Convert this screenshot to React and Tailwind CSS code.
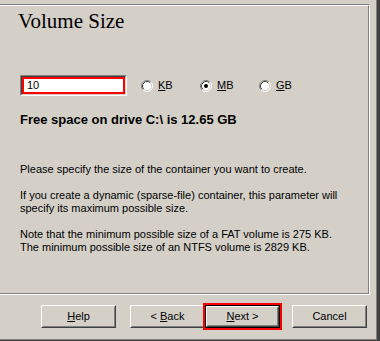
import React from "react";

function Radio({ checked }) {
  return (
    <svg width="12" height="12" viewBox="0 0 12 12" className="shrink-0">
      <circle cx="6" cy="6" r="5" fill="#ffffff" />
      <path d="M2.11 9.89 A5.5 5.5 0 0 1 9.89 2.11" fill="none" stroke="#808080" strokeWidth="1" />
      <path d="M9.89 2.11 A5.5 5.5 0 0 1 2.11 9.89" fill="none" stroke="#ffffff" strokeWidth="1" />
      <path d="M2.82 9.18 A4.5 4.5 0 0 1 9.18 2.82" fill="none" stroke="#404040" strokeWidth="1" />
      <path d="M9.18 2.82 A4.5 4.5 0 0 1 2.82 9.18" fill="none" stroke="#d4d0c8" strokeWidth="1" />
      {checked && <circle cx="6" cy="6" r="2" fill="#000000" />}
    </svg>
  );
}

function RadioItem({ label, checked }) {
  return (
    <div className="w-[59px] flex items-center gap-[5px]">
      <Radio checked={checked} />
      <span>
        <span className="underline underline-offset-[1px]">{label[0]}</span>
        {label.slice(1)}
      </span>
    </div>
  );
}

function Button({ children, isDefault }) {
  const bevel = (
    <div className="h-full w-full border border-t-white border-l-white border-r-[#404040] border-b-[#404040]">
      <div className="h-full w-full border border-t-[#d4d0c8] border-l-[#d4d0c8] border-r-[#808080] border-b-[#808080] flex items-center justify-center">
        {children}
      </div>
    </div>
  );
  if (isDefault) {
    return (
      <div className="w-[75px] h-[23px] border border-black outline-2 outline-[#ff0000] outline-solid relative">
        {bevel}
      </div>
    );
  }
  return <div className="w-[75px] h-[23px]">{bevel}</div>;
}

export default function App() {
  return (
    <div
      className="w-[380px] h-[341px] bg-[#404040] text-black text-[11px] leading-[13px]"
      style={{ fontFamily: '"Liberation Sans", Arial, sans-serif' }}
    >
      <div className="w-[377px] h-[340px] bg-[#808080]">
        <div className="w-[376px] h-[339px] bg-[#d4d0c8] flex flex-col">
          {/* Panel */}
          <div className="mt-[4px] w-[370px] h-[291px] border-t border-r border-b border-t-[#808080] border-r-white border-b-white">
            <div className="w-full h-full border-t border-r border-b border-t-white border-r-[#808080] border-b-[#808080] flex flex-col">
              <div
                className="pl-[18px] mt-[3px] text-[21px] leading-[24px]"
                style={{ fontFamily: '"Liberation Serif", "Times New Roman", serif' }}
              >
                Volume Size
              </div>
              <div className="pl-[20px] mt-[42px] flex items-center">
                <div className="w-[107px] h-[21px] border border-t-[#808080] border-l-[#808080] border-r-white border-b-white">
                  <div className="w-full h-full border border-t-[#404040] border-l-[#404040] border-r-[#d4d0c8] border-b-[#d4d0c8]">
                    <div className="w-full h-full border-2 border-[#ff0000] bg-white pl-[3px] flex items-center">
                      10
                    </div>
                  </div>
                </div>
                <div className="ml-[14px] flex items-center">
                  <RadioItem label="KB" />
                  <RadioItem label="MB" checked />
                  <RadioItem label="GB" />
                </div>
              </div>
              <div className="pl-[20px] mt-[16px] font-bold text-[13px] leading-[16px]">
                Free space on drive C:\ is 12.65 GB
              </div>
              <div className="pl-[20px] mt-[35px] flex flex-col gap-[13px]">
                <p>Please specify the size of the container you want to create.</p>
                <p>
                  If you create a dynamic (sparse-file) container, this parameter will
                  <br />
                  specify its maximum possible size.
                </p>
                <p>
                  Note that the minimum possible size of a FAT volume is 275 KB.
                  <br />
                  The minimum possible size of an NTFS volume is 2829 KB.
                </p>
              </div>
            </div>
          </div>
          {/* Buttons */}
          <div className="mt-[10px] flex items-start">
            <div className="ml-[41px]">
              <Button>
                <span>
                  <span className="underline">H</span>elp
                </span>
              </Button>
            </div>
            <div className="ml-[14px]">
              <Button>
                <span>
                  &lt; <span className="underline">B</span>ack
                </span>
              </Button>
            </div>
            <div>
              <Button isDefault>
                <span>
                  <span className="underline">N</span>ext &gt;
                </span>
              </Button>
            </div>
            <div className="ml-[12px]">
              <Button>
                <span>Cancel</span>
              </Button>
            </div>
          </div>
        </div>
      </div>
    </div>
  );
}
